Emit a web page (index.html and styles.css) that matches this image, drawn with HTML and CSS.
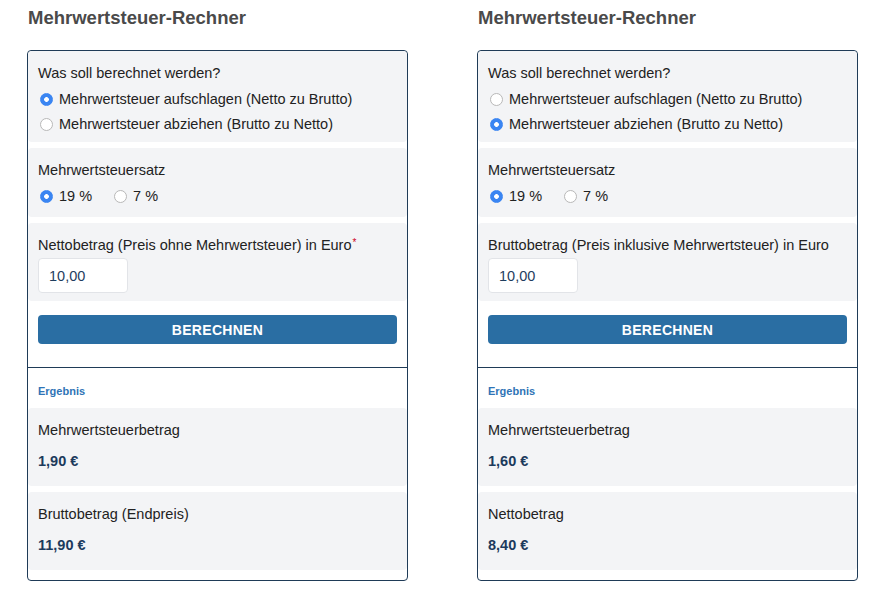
FILE: index.html
```html
<!DOCTYPE html>
<html lang="de">
<head>
<meta charset="utf-8">
<title>Mehrwertsteuer-Rechner</title>
<link rel="stylesheet" href="styles.css">
</head>
<body>
<div class="page">
  <div class="calc">
    <h2 class="title">Mehrwertsteuer-Rechner</h2>
    <div class="card">
      <div class="form">
        <div class="section s1">
          <div class="label">Was soll berechnet werden?</div>
          <label class="row"><input type="radio" name="m1" checked><span>Mehrwertsteuer aufschlagen (Netto zu Brutto)</span></label>
          <label class="row"><input type="radio" name="m1"><span>Mehrwertsteuer abziehen (Brutto zu Netto)</span></label>
        </div>
        <div class="section s2">
          <div class="label">Mehrwertsteuersatz</div>
          <div class="inline">
            <label class="row"><input type="radio" name="r1" checked><span>19 %</span></label>
            <label class="row"><input type="radio" name="r1"><span>7 %</span></label>
          </div>
        </div>
        <div class="section s3">
          <div class="label">Nettobetrag (Preis ohne Mehrwertsteuer) in Euro<sup class="req">*</sup></div>
          <input class="amount" type="text" value="10,00">
        </div>
        <button class="btn" type="button">BERECHNEN</button>
      </div>
      <div class="result">
        <div class="res-title">Ergebnis</div>
        <div class="res-box">
          <div class="label">Mehrwertsteuerbetrag</div>
          <div class="value">1,90 €</div>
        </div>
        <div class="res-box">
          <div class="label">Bruttobetrag (Endpreis)</div>
          <div class="value">11,90 €</div>
        </div>
      </div>
    </div>
  </div>

  <div class="calc">
    <h2 class="title">Mehrwertsteuer-Rechner</h2>
    <div class="card">
      <div class="form">
        <div class="section s1">
          <div class="label">Was soll berechnet werden?</div>
          <label class="row"><input type="radio" name="m2"><span>Mehrwertsteuer aufschlagen (Netto zu Brutto)</span></label>
          <label class="row"><input type="radio" name="m2" checked><span>Mehrwertsteuer abziehen (Brutto zu Netto)</span></label>
        </div>
        <div class="section s2">
          <div class="label">Mehrwertsteuersatz</div>
          <div class="inline">
            <label class="row"><input type="radio" name="r2" checked><span>19 %</span></label>
            <label class="row"><input type="radio" name="r2"><span>7 %</span></label>
          </div>
        </div>
        <div class="section s3">
          <div class="label">Bruttobetrag (Preis inklusive Mehrwertsteuer) in Euro</div>
          <input class="amount" type="text" value="10,00">
        </div>
        <button class="btn" type="button">BERECHNEN</button>
      </div>
      <div class="result">
        <div class="res-title">Ergebnis</div>
        <div class="res-box">
          <div class="label">Mehrwertsteuerbetrag</div>
          <div class="value">1,60 €</div>
        </div>
        <div class="res-box">
          <div class="label">Nettobetrag</div>
          <div class="value">8,40 €</div>
        </div>
      </div>
    </div>
  </div>
</div>
</body>
</html>
```

FILE: styles.css
```css
* { box-sizing: border-box; }
html, body { margin: 0; padding: 0; background: #fff; }
body {
  font-family: "Liberation Sans", Arial, Helvetica, sans-serif;
  font-size: 14.5px;
  color: #222;
}
.page {
  display: flex;
  gap: 69px;
  padding-left: 27px;
}
.calc { width: 381px; }
.title {
  margin: 7px 0 21px 1px;
  font-size: 18.5px;
  line-height: 22px;
  font-weight: bold;
  color: #4a4a4a;
}
.card {
  border: 1px solid #1f3b57;
  border-radius: 4px;
  overflow: hidden;
}
.form {
  border-bottom: 1px solid #1f3b57;
  padding-bottom: 23px;
}
.section {
  background: #f3f4f6;
  border-radius: 4px;
  padding: 12px 10px 5px;
  margin-bottom: 6px;
}
.s2 { padding-bottom: 8px; }
.s3 { padding-bottom: 8px; margin-bottom: 0; }
.label {
  line-height: 20px;
  margin-bottom: 4px;
}
.s3 .label { margin-bottom: 3px; }
.row {
  display: flex;
  align-items: center;
  gap: 6px;
  height: 25px;
  line-height: 25px;
}
.inline {
  display: flex;
  gap: 20px;
}
.row input {
  -webkit-appearance: none;
  appearance: none;
  margin: 0 0 0 2px;
  width: 13px;
  height: 13px;
  border: 1px solid #b8b8b8;
  border-radius: 50%;
  background: #fff;
  flex: none;
}
.row input:checked {
  border-color: #3a85f2;
  background: radial-gradient(circle, #fff 0 2px, #3a85f2 2.7px);
}
.req {
  color: #d0021b;
  font-size: 10px;
  line-height: 0;
  vertical-align: 4px;
  margin-left: 1px;
}
.amount {
  display: block;
  width: 90px;
  height: 35px;
  border: 1px solid #e2e4e8;
  border-radius: 4px;
  background: #fff;
  padding: 0 10px;
  font-family: inherit;
  font-size: 14.5px;
  color: #1f3d5e;
  outline: none;
}
.btn {
  display: block;
  width: 359px;
  height: 29px;
  margin: 14px 0 0 10px;
  border: none;
  border-radius: 4px;
  background: #2a6ea3;
  color: #fff;
  font-family: inherit;
  font-size: 14px;
  font-weight: bold;
  letter-spacing: 0.3px;
  padding: 0;
}
.result { padding: 16px 0 10px; }
.res-title {
  padding-left: 10px;
  font-size: 11px;
  line-height: 14px;
  font-weight: bold;
  color: #2f74b6;
  margin-bottom: 10px;
}
.res-box {
  background: #f3f4f6;
  border-radius: 4px;
  padding: 12px 10px 15px;
}
.res-box + .res-box { margin-top: 6px; }
.res-box .label { margin-bottom: 11px; }
.value {
  line-height: 20px;
  font-weight: bold;
  color: #1b3a5c;
}
```
